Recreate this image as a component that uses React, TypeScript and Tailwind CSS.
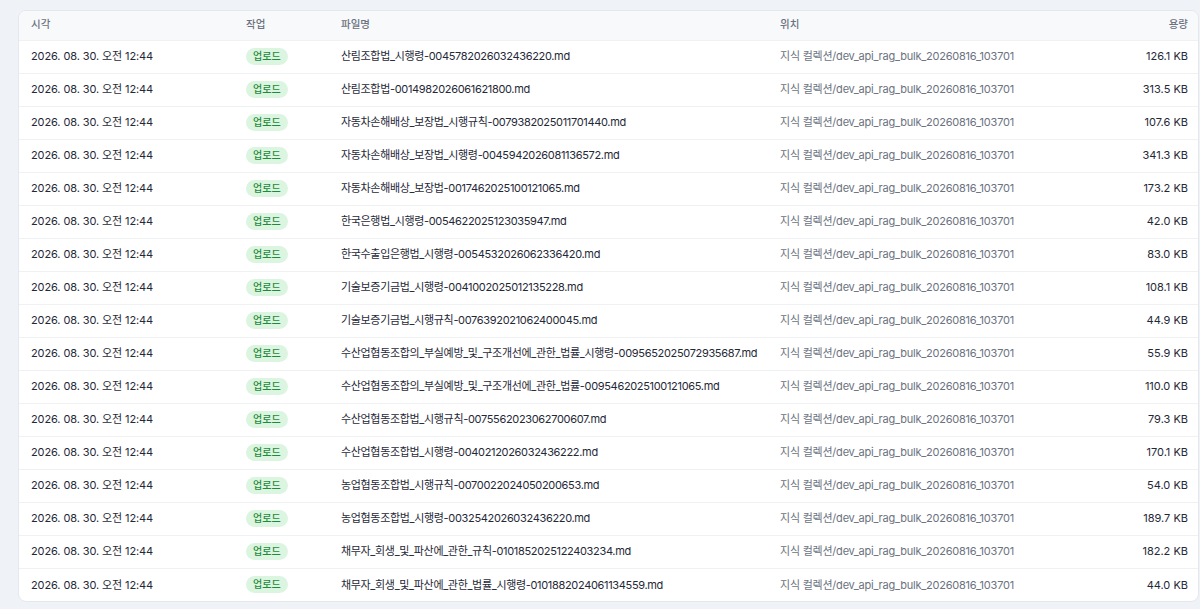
const rows = [
  ["산림조합법_시행령-0045782026032436220.md", "126.1 KB"],
  ["산림조합법-0014982026061621800.md", "313.5 KB"],
  ["자동차손해배상_보장법_시행규칙-0079382025011701440.md", "107.6 KB"],
  ["자동차손해배상_보장법_시행령-0045942026081136572.md", "341.3 KB"],
  ["자동차손해배상_보장법-0017462025100121065.md", "173.2 KB"],
  ["한국은행법_시행령-0054622025123035947.md", "42.0 KB"],
  ["한국수출입은행법_시행령-0054532026062336420.md", "83.0 KB"],
  ["기술보증기금법_시행령-0041002025012135228.md", "108.1 KB"],
  ["기술보증기금법_시행규칙-0076392021062400045.md", "44.9 KB"],
  ["수산업협동조합의_부실예방_및_구조개선에_관한_법률_시행령-0095652025072935687.md", "55.9 KB"],
  ["수산업협동조합의_부실예방_및_구조개선에_관한_법률-0095462025100121065.md", "110.0 KB"],
  ["수산업협동조합법_시행규칙-0075562023062700607.md", "79.3 KB"],
  ["수산업협동조합법_시행령-0040212026032436222.md", "170.1 KB"],
  ["농업협동조합법_시행규칙-0070022024050200653.md", "54.0 KB"],
  ["농업협동조합법_시행령-0032542026032436220.md", "189.7 KB"],
  ["채무자_회생_및_파산에_관한_규칙-0101852025122403234.md", "182.2 KB"],
  ["채무자_회생_및_파산에_관한_법률_시행령-0101882024061134559.md", "44.0 KB"],
];

export default function App() {
  return (
    <div
      className="min-h-[609px] bg-[#eff2f7] pl-[18px] pr-[1px] pt-[10px]"
      style={{ fontFamily: 'Inter, "Noto Sans CJK KR", sans-serif' }}
    >
      <div className="overflow-hidden rounded-lg border border-[#e4e7ec] bg-white">
        <table className="w-full table-fixed border-collapse text-[11px]">
          <colgroup>
            <col className="w-[215px]" />
            <col className="w-[95px]" />
            <col className="w-[439px]" />
            <col />
            <col className="w-[120px]" />
          </colgroup>
          <thead>
            <tr className="h-[29px] bg-[#f8f9fb] text-left text-[10.5px] text-[#6b7280]">
              <th className="pl-3 font-medium">시각</th>
              <th className="pl-3 font-medium">작업</th>
              <th className="pl-3 font-medium">파일명</th>
              <th className="pl-3 font-medium">위치</th>
              <th className="pr-[10px] text-right font-medium">용량</th>
            </tr>
          </thead>
          <tbody>
            {rows.map(([name, size]) => (
              <tr key={name} className="h-[33px] border-t border-[#f0f1f3]">
                <td className="pl-3 tracking-[-0.01em] text-[#1f2937]">2026. 08. 30. 오전 12:44</td>
                <td className="pl-3">
                  <span className="inline-flex h-[17px] items-center rounded-full bg-[#dcf5e0] px-[7px] text-[10px] font-medium text-[#1f8a3b]">
                    업로드
                  </span>
                </td>
                <td className="whitespace-nowrap pl-3 tracking-[-0.03em] text-[#1f2937]">{name}</td>
                <td className="whitespace-nowrap pl-3 tracking-[-0.02em] text-[#6b7280]">
                  지식 컬렉션/dev_api_rag_bulk_20260816_103701
                </td>
                <td className="pr-[10px] text-right text-[#1f2937]">{size}</td>
              </tr>
            ))}
          </tbody>
        </table>
      </div>
    </div>
  );
}
